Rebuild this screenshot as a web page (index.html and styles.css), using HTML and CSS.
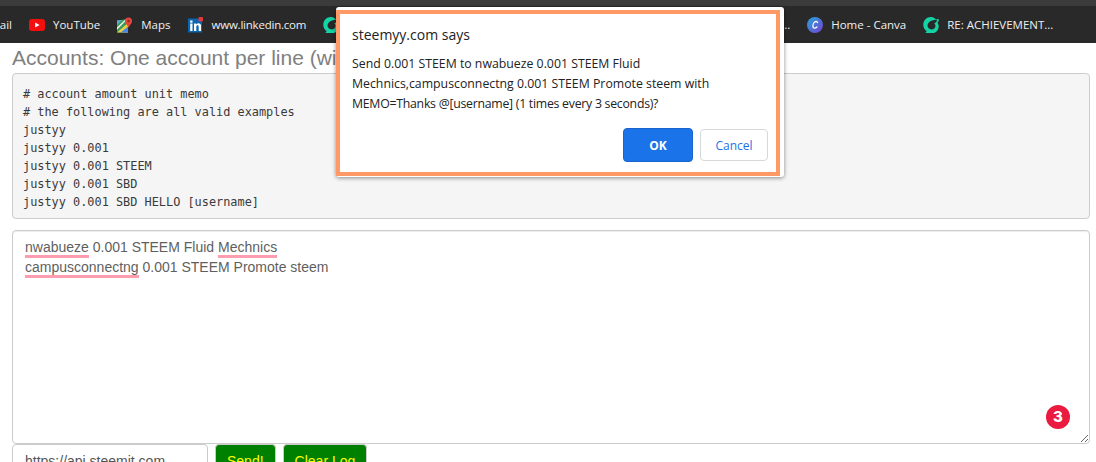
FILE: index.html
```html
<!DOCTYPE html>
<html lang="en">
<head>
<meta charset="utf-8">
<title>Steem Wallet Tool</title>
<link rel="stylesheet" href="styles.css">
</head>
<body>
<div class="strip"></div>
<nav class="bookmarks">
  <span class="mark first"><span class="cut">ail</span></span>
  <span class="mark">
    <svg class="ic yt" viewBox="0 0 16 12"><rect width="16" height="12" rx="3" fill="#f40f0f"/><path d="M6.200 3.600 10.600 6 6.200 8.400z" fill="#fff"/></svg>
    YouTube
  </span>
  <span class="mark">
    <svg class="ic" viewBox="0 0 16 16"><path d="M0 3.500 11 2v13.500H0z" fill="#3a9a57"/><path d="M0 15.500 11 6v9.500z" fill="#f2cf3f"/><path d="M3.500 15.500 11 9.500v6z" fill="#4a86e8"/><path d="M0 10.500 8 2.800l2-.3L0 12.800z" fill="#f4f4ee"/><path d="M0 3.500 5 2.900 0 8z" fill="#5aa9d8"/><circle cx="11.500" cy="4" r="3.500" fill="#e8453c"/><path d="M8.500 5.800 11.500 10.500 14.500 5.800z" fill="#e8453c"/><circle cx="11.500" cy="4" r="1.200" fill="#8d2a20"/></svg>
    Maps
  </span>
  <span class="mark">
    <svg class="ic" viewBox="0 0 16 16"><rect y="1.500" width="14" height="14" fill="#0a66b0"/><rect x="10.500" width="4.500" height="4.500" rx="1" fill="#e0393e"/><rect x="2.200" y="6.500" width="2.300" height="7.500" fill="#fff"/><rect x="2.200" y="3.500" width="2.300" height="2.200" fill="#fff"/><path d="M6 6.500h2.200v1C8.800 6.700 9.600 6.300 10.500 6.300c1.600 0 2.500 1 2.500 2.800V14h-2.300V9.800c0-.9-.3-1.500-1.100-1.500S8.300 8.900 8.300 9.800V14H6z" fill="#fff"/></svg>
    <span class="tight">www.linkedin.com</span>
  </span>
  <span class="mark">
    <svg class="ic" viewBox="0 0 16 16"><use href="#swirl"/></svg>
  </span>
  <span class="mark hidden-run">...</span>
  <span class="mark">
    <svg class="ic" viewBox="0 0 16 16"><defs><linearGradient id="cv" x1="0" y1="0" x2="1" y2="1"><stop offset="0" stop-color="#22a6d8"/><stop offset="1" stop-color="#7b3fd2"/></linearGradient></defs><circle cx="8" cy="8" r="8" fill="url(#cv)"/><path d="M10.600 5.600C10.300 4.600 9.300 4.300 8.400 4.700 6.800 5.400 5.600 7.800 6 9.800c.3 1.500 2.100 1.700 3.900.2" fill="none" stroke="#fff" stroke-width="1.300" stroke-linecap="round"/></svg>
    Home - Canva
  </span>
  <span class="mark">
    <svg class="ic" viewBox="0 0 16 16"><g id="swirl"><path d="M8 0C3.600 0 .3 3.300.3 7.700c0 2.800 1.300 5 3.400 6.400L2.500 16H11c2.900-1 4.700-3.500 4.700-6.400 0-1.500-.5-2.800-1.300-3.900C16 4.700 16 3 15.500 1.800 13.500 2.500 11 3 9 3.500 6.500 4.200 4.500 6.200 4.500 8.600c0 2.200 1.800 3.800 4 3.800 2.300 0 4-1.400 4-3.400 0-1-.5-1.900-1.300-2.500C12.400 5.600 13.500 4.800 14 3.700 12.500 1.400 10.500 0 8 0z" fill="#14d4a6" fill-rule="evenodd"/></g></svg>
    RE: ACHIEVEMENT...
  </span>
</nav>

<main class="page">
  <h4 class="title">Accounts: One account per line (with amount and memo)</h4>
  <pre class="examples"># account amount unit memo
# the following are all valid examples
justyy
justyy 0.001
justyy 0.001 STEEM
justyy 0.001 SBD
justyy 0.001 SBD HELLO [username]</pre>
  <div class="accounts"><span class="spell">nwabueze</span> 0.001 STEEM Fluid <span class="spell">Mechnics</span><br><span class="spell">campusconnectng</span> 0.001 STEEM Promote steem</div>
  <div class="controls">
    <input class="node" type="text" value="https://api.steemit.com">
    <button class="act" type="button">Send!</button>
    <button class="act" type="button">Clear Log</button>
  </div>
</main>

<span class="badge">3</span>

<section class="dialog">
  <div class="dialog-title">steemyy.com says</div>
  <p class="dialog-msg">Send 0.001 STEEM to nwabueze 0.001 STEEM Fluid<br>Mechnics,campusconnectng 0.001 STEEM Promote steem with<br><span class="line-tight">MEMO=Thanks @[username] (1 times every 3 seconds)?</span></p>
  <div class="dialog-actions">
    <button class="btn-ok" type="button">OK</button>
    <button class="btn-cancel" type="button">Cancel</button>
  </div>
  <div class="highlight"></div>
</section>
</body>
</html>
```

FILE: styles.css
```css
html, body { margin: 0; padding: 0; height: 462px; overflow: hidden; background: #fff; }
body { font-family: "Liberation Sans", Arial, sans-serif; position: relative; }

.strip { height: 6px; background: #3b3b3b; }

.bookmarks {
  height: 37px;
  background: #292929;
  color: #f0f0f0;
  display: flex;
  align-items: center;
  gap: 17px;
  font-family: "Open Sans", "Noto Sans", sans-serif;
  font-size: 11.5px;
  white-space: nowrap;
  overflow: hidden;
}
.mark { display: flex; align-items: center; gap: 8px; flex: none; }
.first { width: 12px; justify-content: flex-end; overflow: hidden; }
.cut { flex: none; }
.tight { letter-spacing: -0.22px; }
.ic { width: 16px; height: 16px; flex: none; display: block; }
.yt { height: 12px; }
.hidden-run { width: 434px; justify-content: flex-end; }

.page { padding: 0 6px 0 12px; }
.title {
  margin: 0;
  padding-top: 2px;
  height: 28px;
  font-size: 21px;
  font-weight: 400;
  line-height: 26px;
  color: #808080;
  white-space: nowrap;
  overflow: hidden;
}
.examples {
  margin: 0;
  box-sizing: border-box;
  height: 146px;
  padding: 11px 10px;
  background: #f5f5f5;
  border: 1px solid #ccc;
  border-radius: 4px;
  font-family: "DejaVu Sans Mono", monospace;
  font-size: 11.88px;
  line-height: 18px;
  color: #3a3a3a;
}
.accounts {
  margin-top: 11px;
  box-sizing: border-box;
  height: 214px;
  padding: 6px 12px;
  border: 1px solid #ccc;
  border-radius: 4px;
  box-shadow: inset 0 1px 1px rgba(0,0,0,.075);
  font-size: 14px;
  line-height: 20px;
  color: #5f5f5f;
  resize: vertical;
  overflow: auto;
}
.spell { border-bottom: 3px solid #ff9db0; padding-bottom: 0; }
.controls { display: flex; align-items: flex-start; gap: 7px; }
.node {
  box-sizing: border-box;
  width: 196px;
  height: 34px;
  padding: 6px 12px;
  border: 1px solid #ccc;
  border-radius: 4px;
  font: 14px/20px "Liberation Sans", Arial, sans-serif;
  color: #555;
  margin: 0;
}
.act {
  margin: 0;
  height: 34px;
  padding: 6px 11px;
  background: #008000;
  color: #ff0;
  border: 1px solid #ccc;
  border-radius: 4px;
  font: 14px/20px "Liberation Sans", Arial, sans-serif;
}

.badge {
  position: absolute;
  left: 1046px;
  top: 405px;
  width: 24px;
  height: 24px;
  border-radius: 50%;
  background: #ea1a40;
  color: #fff;
  font: 800 15px/24px "Inter", sans-serif;
  text-align: center;
}

.dialog {
  position: absolute;
  left: 336px;
  top: 7px;
  box-sizing: border-box;
  width: 448px;
  height: 170px;
  padding: 19px 16px 0;
  background: #fff;
  border-radius: 3px;
  box-shadow: 0 1px 4px rgba(0,0,0,.45);
  font-family: "Open Sans", "Noto Sans", sans-serif;
  color: #222;
}
.dialog-title { font-size: 14px; line-height: 18px; }
.dialog-msg { margin: 10px 0 0; font-size: 12.3px; line-height: 20px; white-space: nowrap; }
.line-tight { letter-spacing: -0.26px; }
.dialog-actions { display: flex; justify-content: flex-end; align-items: center; gap: 7px; margin-top: 14px; }
.btn-ok, .btn-cancel { font-family: inherit; font-size: 12px; padding: 0; box-sizing: border-box; }
.btn-ok {
  width: 70px; height: 34px;
  background: #1a73e8; color: #fff;
  border: 1px solid #1864cc; border-radius: 4px;
  font-weight: 700;
}
.btn-cancel {
  width: 68px; height: 32px;
  background: #fff; color: #1a73e8;
  border: 1px solid #d6d9dc; border-radius: 4px;
}
.highlight {
  position: absolute;
  left: 0;
  top: 3px;
  width: 444px;
  height: 166px;
  box-sizing: border-box;
  border: 4px solid #ff9966;
  pointer-events: none;
}
```
